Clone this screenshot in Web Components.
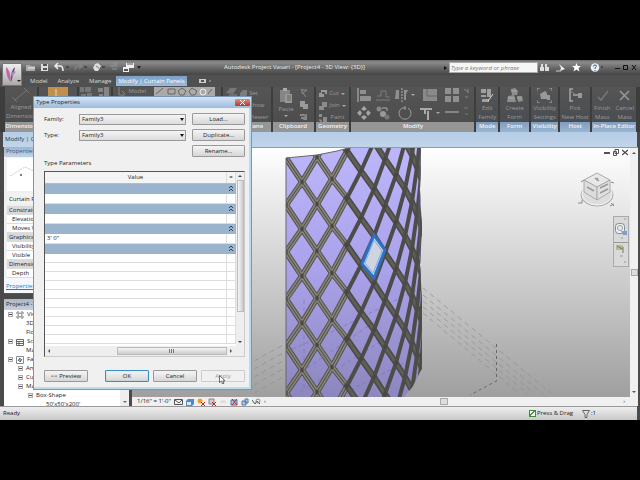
<!DOCTYPE html>
<html lang="en">
<head>
<meta charset="utf-8">
<title>Autodesk Project Vasari</title>
<style>
html,body{margin:0;height:100%;background:#000}
body{font-family:"Open Sans","Noto Sans",sans-serif;font-size:6px;line-height:9px;color:#222}
vasari-app{height:100vh}
</style>
</head>
<body>
<vasari-app></vasari-app>
<script>
const define = (name, html, setup) => customElements.define(name, class extends HTMLElement {
  connectedCallback() {
    if (this.shadowRoot) return;
    const root = this.attachShadow({ mode: 'open' });
    root.innerHTML = '<style>:host,*{box-sizing:border-box}button,input,select{font:inherit;color:inherit;margin:0}button{border:0;padding:0;background:none}svg{display:block;flex:none}</style>' +
      (typeof html === 'function' ? html(this) : html);
    if (setup) setup(root, this);
  }
});

const glyphs = {
  dim: [26, 14, '<path d="M7 12 19 2M4 9l5 5M16 0l5 5" stroke="#777" fill="none"/>'],
  arrow: [20, 16, '<path fill="#c08f4c" d="M0 0h20v16H0z"/><path d="M8 2v9l3-2 3 3" stroke="#e8d9bd" fill="none"/>'],
  blocks: [13, 14, '<path d="M0 0h4v5H0zM5 0h6v5H5zM1 7h5v6H1zM7 6h5v7H7z" fill="#777"/>'],
  windows: [13, 14, '<path d="M1 1h5v4H1zM7 0h5v11H7zM2 7h4v5H2z" fill="#858585"/>'],
  modelline: [8, 9, '<path d="M1 0v8h6M4 4l3 3" stroke="#888" fill="none"/>'],
  draw: [61, 9, '<path fill="#aaa" d="M0 0h61v9H0z"/><path d="M2 7 9 1M14 2h7v5h-7zM28 1l4 3-2 4h-4l-2-4zM38 1l5 3-2 4h-4l-2-4zM58 2l-4 5" stroke="#666" fill="none"/><circle cx="49" cy="5" r="3" stroke="#eee" fill="none"/>'],
  paste: [14, 16, '<path d="M1 2h10v12H1z" fill="#858585"/><path d="M4 0h4v3H4z" fill="#aaa"/><path d="M6 6h7v9H6z" fill="#999"/><path d="M8 8h4M8 10h4M8 12h4" stroke="#666"/>'],
  cutS: [8, 8, '<path d="M1 1h6L3 4l3 4M2 0v5" stroke="#8a8a8a" fill="none"/>'],
  copyS: [8, 8, '<path d="M0 0h5v6H0zM3 3h5v5H3z" fill="#9a9a9a"/>'],
  match: [8, 8, '<path d="M0 1h5v2H0zM1 4h5v2H1zM6 1h1v6H3" fill="#888"/>'],
  cut: [8, 8, '<path d="M2 0h6v4H5v3H0V3h2z" fill="#999"/><path d="M3 2h3v2H3z" fill="#555"/>'],
  join: [8, 8, '<path d="M3 0h5v5H5v3H0V4h3z" fill="#8c8c8c"/>'],
  paint: [9, 8, '<path d="M0 0h3v3H0zM4 3h4v5H4z" fill="#8c8c8c"/><path d="M1 5v2h2" stroke="#aaa" fill="none"/>'],
  align: [14, 14, '<path d="M1 0v14" stroke="#bbb"/><path d="M3 2h6v4H3zM3 8h11v5H3z" fill="#8f8f8f"/>'],
  offset: [14, 14, '<path d="M0 12h14M1 8h4V3h5v6h4" stroke="#7d7d7d" fill="none"/>'],
  mirror: [14, 14, '<path d="M7 0v14" stroke="#aaa" stroke-dasharray="2 1"/><path d="M1 2h3v9H0zM9 2h4l-2 4v6H9z" fill="#8f8f8f"/>'],
  split: [14, 14, '<path d="M0 1h14v12H0z" fill="#8a8a8a"/><path d="M4 1v7h10" stroke="#666" fill="none"/>'],
  array: [14, 14, '<path d="M0 0h6v6H0zM8 0h6v6H8zM0 8h6v6H0zM8 8h6v6H8z" fill="#909090"/>'],
  pin: [5, 10, '<path d="M0 1l4 3M4 1v4M1 9h3" stroke="#888"/>'],
  move: [14, 14, '<path d="M7 0l3 3-3 2-3-2zM7 14l3-3-3-2-3 2zM0 7l3-3 2 3-2 3zM14 7l-3-3-2 3 2 3z" fill="#a4a4a4"/>'],
  copy: [14, 14, '<circle cx="3" cy="3" r="2.5" fill="#888"/><path d="M6 2h5v3" stroke="#aaa" fill="none"/><circle cx="7" cy="8" r="3" fill="#999"/><circle cx="11" cy="11" r="2.5" fill="#777"/>'],
  rotate: [14, 14, '<path d="M4 2a6 6 0 1 0 6 0M7 0v4M4 2h4" stroke="#9c9c9c" fill="none"/>'],
  trim: [14, 14, '<path d="M0 3h12M8 14V5M5 3v5" stroke="#aaa" stroke-width="2" fill="none"/>'],
  dash: [14, 14, '<path d="M0 6h14" stroke="#858585" stroke-width="2"/>'],
  dot: [5, 10, '<path d="M0 2h4M1 8h3" stroke="#7b7b7b"/>'],
  editfam: [15, 15, '<path d="M1 1h5v4H1zM7 1h4v8H7zM1 7h5v2H1zM2 11h7v3H2z" fill="#a0a0a0"/><path d="m8 13 5-7" stroke="#ddd"/>'],
  form: [16, 15, '<path d="M4 1l4-1 3 3-1 4H5zM1 8l6-1 2 7H0zM10 8h5l1 5-5 1z" fill="#8e8e8e"/><path d="M4 3h6M1 10h7M10 10h5" stroke="#aaa"/>'],
  visset: [15, 15, '<path d="M0 3V0h3M12 0h3v3M15 12v3h-3M3 15H0v-3" stroke="#aaa" fill="none"/><path d="M3 6l5-3 2 2v6H4zM10 7h3v5h-3z" fill="#999"/>'],
  host: [15, 15, '<path d="M5 1H2v12h3M5 7h6" stroke="#a5a5a5" fill="none" stroke-width="1.5"/><path d="M10 5h4v5h-4z" fill="#999"/><path d="M2 3l5 3" stroke="#888"/>'],
  check: [13, 15, '<path d="m2 9 3 3 7-9" stroke="#777" stroke-width="1.5" fill="none"/>'],
  cross: [13, 15, '<path d="m2 3 9 9M11 3l-9 9" stroke="#999" stroke-width="1.5" fill="none"/>'],
  plane: [12, 9, '<path d="M1 6l4-5h7l-4 6z" fill="#777"/><path d="M4 8h8" stroke="#888"/>'],
  setI: [7, 8, '<path d="M0 3l3-3h4v5l-3 3H0z" fill="#7c7c7c"/>']
};
const svg = (w, h, body) => `<svg width="${w}" height="${h}" viewBox="0 0 ${w} ${h}" aria-hidden="true">${body}</svg>`;
const icon = n => svg(...glyphs[n]);

define('tool-button', el => `<style>
 :host{display:flex;justify-content:center}
 button{display:flex;align-items:center;gap:2px;color:#9b9b9b;white-space:nowrap;line-height:9px;text-align:center}
 :host([big]) button{flex-direction:column;gap:1px;justify-content:flex-start}
 .more{border:2px solid transparent;border-top-color:#aaa;border-bottom:0}
 </style><button aria-label="${el.getAttribute('label') || el.getAttribute('icon')}">${icon(el.getAttribute('icon'))}${el.childNodes.length ? '<span><slot></slot></span>' : ''}${el.hasAttribute('menu') ? '<i class="more"></i>' : ''}</button>`);

define('ribbon-panel', el => `<style>
 :host{display:flex;flex-direction:column;min-width:0;overflow:hidden}
 .tools{flex:1;background:linear-gradient(#555,#4d4d4d);display:flex;gap:var(--gap,4px);justify-content:center;overflow:hidden}
 .name{height:10px;line-height:9px;text-align:center;white-space:nowrap;background:#969696;color:#f4f4f4;font-weight:600;overflow:hidden;display:flex;justify-content:center}
 :host([context]) .tools{background:linear-gradient(#535556,#4a4d50);gap:5px}
 :host([context]) .name{background:linear-gradient(#809dbc,#9cb6d2)}
 </style><div class="tools"><slot></slot></div><div class="name">${el.getAttribute('name')}</div>`);

define('title-bar', `<style>
 :host{display:flex;align-items:center;height:15px;flex:none;background:linear-gradient(#6a6a6a,#8b8b8b 15%,#626262 60%,#454545);color:#eee;padding:0 3px 0 25px;gap:4px}
 nav{display:flex;gap:5px;align-items:center;flex:195 1 0}
 h1{font:inherit;margin:0;white-space:nowrap}
 .right{flex:268 1 0;display:flex;align-items:center;justify-content:flex-end;gap:6px}
 .find{display:flex;align-items:center;gap:2px}
 input{width:89px;height:11px;border:1px solid #aaa;background:#f6f6f6;padding:0 1px;font-style:italic;min-width:0}
 input::placeholder{color:#777;opacity:1}
 .play{border:2px solid transparent;border-left:3px solid #111;border-right:0}
 .win{display:flex;gap:3px;margin-left:6px}
 </style>
 <nav aria-label="Quick access">
 <button aria-label="Open">${svg(11,9,'<path d="M1 2h4l1 1h4v5H1z" fill="#aaa"/><path d="M3 5h7" stroke="#eee"/>')}</button>
 <button aria-label="Save">${svg(8,9,'<path d="M0 1h7v7H0z" fill="#ddd"/><path d="M2 1h4v2H2zM2 5h4v2H2z" fill="#555"/>')}</button>
 <button aria-label="Undo">${svg(15,9,'<path d="M1 3h5q3 0 3 5M4 0 1 3l3 3" stroke="#eee" fill="none" stroke-width="1.5"/><path d="M12 4h3" stroke="#222"/>')}</button>
 <button aria-label="Redo">${svg(13,9,'<path d="M8 3H4Q1 3 1 7M5 1l3 2-3 3" stroke="#8c8c8c" fill="none"/><path d="M10 4h3" stroke="#222"/>')}</button>
 <button aria-label="Measure">${svg(13,9,'<path d="m3 1 3-1 3 3-3 5H3L1 5z" fill="#ddd"/><path d="m4 3 3 2" stroke="#777"/><path d="M10 4h3" stroke="#222"/>')}</button>
 <button aria-label="Thin lines">${svg(8,9,'<path d="M0 3h8M2 6h5M3 1h4" stroke="#999"/>')}</button>
 <button aria-label="Switch windows">${svg(19,9,'<path d="M3 0h8v5H3zM0 4h6v5H0z" fill="#eee"/><path d="M4 1h6" stroke="#555"/><path d="M1 6h4v2H1z" fill="#555"/><path d="m14 3 4 0-2 3z" fill="#222"/>')}</button>
 </nav>
 <h1>Autodesk Project Vasari - [Project4 - 3D View: {3D}]</h1>
 <div class="right"><span class="find"><i class="play"></i><input type="search" aria-label="Search help" placeholder="Type a keyword or phrase">
 <button aria-label="Search">${svg(9,9,'<path d="M1 1h2v3H1zM5 1h2v3H5zM0 4h4v4H0zM5 4h4v4H5z" fill="#ddd"/>')}</button></span>
 <button aria-label="Communication">${svg(11,9,'<path d="m4 1 6 5-5 2 1-3z" fill="#eee"/><path d="M1 8h5" stroke="#ccc"/>')}</button>
 <button aria-label="Favorites">${svg(9,9,'<path d="m4.500 0 1.200 3H9L6.500 5l1 3.500-3-2-3 2 1-3.500L0 3h3.300z" fill="#fff"/>')}</button>
 <button aria-label="Help">${svg(16,9,'<circle cx="8" cy="4.500" r="4.300" fill="#eee"/><path d="M6.500 3.500q0-1.500 1.500-1.500t1.500 1.300L8 5v1M8 7v1" stroke="#3355aa" fill="none"/><path d="M14 4h2" stroke="#222"/>')}</button>
 <span class="win"><button aria-label="Minimize">${svg(5,9,'<path d="M0 5.500h5" stroke="#111"/>')}</button>
 <button aria-label="Restore">${svg(5,9,'<path d="M.5 2.500h4v4h-4z" stroke="#111" fill="none"/>')}</button>
 <button aria-label="Close">${svg(6,9,'<path d="m1 2 4 5M5 2 1 7" stroke="#111"/>')}</button></span></div>`);

define('ribbon-tabs', `<style>
 :host{display:flex;align-items:center;height:12px;flex:none;background:#505050;padding-left:25px;color:#ddd;gap:0}
 button{padding:0 5px;height:10px;line-height:9px;white-space:nowrap}
 .on{background:linear-gradient(#7d9fc4,#9bbbdc);color:#fff;padding:0 2px}
 .x{margin-left:7px;display:flex;align-items:center}
 </style><button>Model</button><button>Analyze</button><button>Manage</button><button class="on">Modify | Curtain Panels</button>
 <button class="x" aria-label="Collapse ribbon">${svg(12,8,'<path d="M0 2h7v4H0z" fill="#ccc"/><path d="M2 3h3v2H2z" fill="#555"/><path d="M10 4h2" stroke="#aaa"/>')}</button>`);

define('ribbon-bar', `<style>
 :host{display:flex;height:45px;flex:none;background:#3d3d3d;padding:0 4px 0 5px;gap:2px}
 .col{display:flex;flex-direction:column;gap:4px;align-items:flex-start;padding-top:2px}
 .col.text{gap:3px}
 .grid{display:grid;grid-template-columns:repeat(6,auto);gap:4px 5px;padding-top:1px;align-content:start}
 tool-button{align-items:flex-start}
 tool-button[big]{padding-top:1px}
 </style>
 <ribbon-panel name="Dimension" style="flex:32 1 0"><tool-button big icon="dim">Aligned<br>Dimension</tool-button></ribbon-panel>
 <ribbon-panel name="Select" style="flex:38 1 0"><tool-button icon="arrow"></tool-button></ribbon-panel>
 <ribbon-panel name="Properties" style="flex:32 1 0"><tool-button icon="blocks"></tool-button><tool-button icon="windows"></tool-button></ribbon-panel>
 <ribbon-panel name="Draw" style="flex:108 1 0"><tool-button icon="modelline">Model</tool-button><tool-button icon="draw" style="margin-left:4px"></tool-button></ribbon-panel>
 <ribbon-panel name="Work Plane" style="flex:48 1 0;--gap:3px"><tool-button icon="plane"></tool-button><div class="col text"><tool-button icon="setI">Set</tool-button><tool-button icon="setI">Show</tool-button><tool-button icon="setI">Viewer</tool-button></div></ribbon-panel>
 <ribbon-panel name="Clipboard" style="flex:41 1 0"><tool-button big icon="paste" menu>Paste</tool-button><div class="col" style="padding-left:2px"><tool-button icon="cutS"></tool-button><tool-button icon="copyS"></tool-button><tool-button icon="match"></tool-button></div></ribbon-panel>
 <ribbon-panel name="Geometry" style="flex:34 1 0"><div class="col text"><tool-button icon="cut" menu>Cut</tool-button><tool-button icon="join" menu>Join</tool-button><tool-button icon="paint">Paint</tool-button></div></ribbon-panel>
 <ribbon-panel name="Modify" style="flex:123 1 0"><div class="grid">
  <tool-button icon="align"></tool-button><tool-button icon="offset"></tool-button><tool-button icon="mirror" menu></tool-button><tool-button icon="split"></tool-button><tool-button icon="array"></tool-button><tool-button icon="pin"></tool-button>
  <tool-button icon="move"></tool-button><tool-button icon="copy"></tool-button><tool-button icon="rotate"></tool-button><tool-button icon="trim" menu></tool-button><tool-button icon="dash"></tool-button><tool-button icon="dot"></tool-button></div></ribbon-panel>
 <ribbon-panel context name="Mode" style="flex:22 1 0"><tool-button big icon="editfam">Edit<br>Family</tool-button></ribbon-panel>
 <ribbon-panel context name="Form" style="flex:29 1 0"><tool-button big icon="form">Create<br>Form</tool-button></ribbon-panel>
 <ribbon-panel context name="Visibility" style="flex:27 1 0"><tool-button big icon="visset">Visibility<br>Settings</tool-button></ribbon-panel>
 <ribbon-panel context name="Host" style="flex:30 1 0"><tool-button big icon="host">Pick<br>New Host</tool-button></ribbon-panel>
 <ribbon-panel context name="In-Place Editor" style="flex:44 1 0"><tool-button big icon="check">Finish<br>Mass</tool-button><tool-button big icon="cross">Cancel<br>Mass</tool-button></ribbon-panel>`);

define('properties-palette', `<style>
 :host{display:flex;flex-direction:column;background:#f0f0f0;border-bottom:1px solid #555}
 h2{margin:0;font:inherit;height:10px;background:linear-gradient(#9eb6d0,#c0d2e5);color:#3c5878;padding-left:2px}
 .pic{height:33px;background:#fff;margin:1px 3px 2px;display:flex}
 table{border-collapse:collapse;margin:0 3px;background:#fff;width:calc(100% - 6px)}
 td,th{height:9px;padding:0 0 0 5px;font-weight:400;text-align:left;white-space:nowrap;line-height:8px;border-bottom:1px solid #ddd}
 th{background:#d9d9d9;padding-left:2px}.top th{background:#f2f2f2;height:12px;border-bottom:2px solid #eee}
 .foot{padding:4px 2px 0;height:15px;background:#f4f8fc} a{color:#2a7ab8}
 </style><h2>Properties</h2><div class="pic">${svg(60,33,'<path d="M3 18 18 9l22 10" stroke="#ccc" fill="none" stroke-dasharray="2 1"/><circle cx="14" cy="17" r="1" fill="#555"/>')}</div>
 <table><tbody><tr class="top"><th>Curtain Panels (1)</th></tr><tr><th>Constraints</th></tr><tr><td>Elevation</td></tr><tr><td>Moves With Grids</td></tr><tr><th>Graphics</th></tr><tr><td>Visibility/Graphics</td></tr><tr><td>Visible</td></tr><tr><th>Dimensions</th></tr><tr><td>Depth</td></tr></tbody></table>
 <div class="foot"><a href="#help">Properties help</a></div>`);

define('tree-item', el => `<style>
 :host{display:flex;align-items:center;height:9px;gap:3px;white-space:nowrap;padding-left:calc(4px + var(--level,0) * 10px)}
 .t{width:5px;height:5px;border:1px solid #aaa;background:#eee;flex:none}
 .t::after{content:"";display:block;height:1px;margin:1px 0;background:#555}
 .t.none{visibility:hidden}
 </style><i class="t ${el.hasAttribute('leaf') ? 'none' : ''}"></i>${el.hasAttribute('pic') ? svg(8,8,{v:'<path d="M1 3V1h2M5 1h2v2M7 5v2H5M3 7H1V5" stroke="#777" fill="none"/><circle cx="4" cy="4" r="2" stroke="#777" fill="none"/>',s:'<path d="M.5 1.500h7v6h-7zM0 3.500h8M0 5.500h8M3 3v4" stroke="#666" fill="none"/>',f:'<path d="M.5.500h7v7h-7z" stroke="#889" fill="none"/><path d="m2 5 2-3v4l2-3" stroke="#555" fill="none"/>'}[el.getAttribute('pic')]) : ''}<span><slot></slot></span>`,
 (r, el) => el.style.setProperty('--level', el.getAttribute('level') || 0));

define('project-browser', `<style>
 :host{display:flex;flex-direction:column;background:#fff;min-height:0;overflow:hidden}
 h2{margin:0;font:inherit;height:11px;flex:none;background:linear-gradient(#aeb9c6,#c6d0dc);padding:1px 2px;white-space:nowrap}
 .in{display:flex;flex:1;min-height:0}.tree{flex:1;overflow:hidden}
 .bar{width:9px;background:#eee;display:flex;align-items:flex-end;justify-content:center;padding-bottom:3px}
 i.d{border:2px solid transparent;border-top-color:#666;border-bottom:0}
 </style><h2>Project4 - Project Browser</h2><div class="in"><div class="tree">
 <tree-item pic="v">Views (all)</tree-item><tree-item leaf level="1">3D Views</tree-item><tree-item leaf level="1">Floor Plans</tree-item><tree-item pic="s">Schedules</tree-item><tree-item leaf level="1">Mass</tree-item><tree-item pic="f">Families</tree-item><tree-item level="1">Annotation</tree-item><tree-item level="1">Curtain Panels</tree-item><tree-item level="1">Mass</tree-item><tree-item level="2">Box-Shape</tree-item><tree-item leaf level="3">50'x50'x200'</tree-item></div>
 <div class="bar"><i class="d"></i></div></div>`);

function facade() {
  // Column positions of the curved wall and the height of one diagonal at each column.
  const X = [286,302,317,332,347,361,374,385,396,405,412,417,421,424];
  const D = [205,229,251,273,292,312,330,347,363,377,390,402,413,423];
  let near = '', down = '', up = '', joints = '';
  for (let n = -7; n < 6; n++) for (let k = 0; k < X.length - 1; k++) {
    const y = D[k] + 47 * n;
    const a = `M${X[k]} ${y}L${X[k+1]} ${D[k+1] + 47*n}`, b = `M${X[k]} ${y}L${X[k+1]} ${D[k+1] + 47*(n-1)}`;
    if (k < 4) near += a + b; else { down += a; up += b; }
    if (k < 9) joints += `M${X[k]-2} ${y}l2-3 2 3-2 3z`;
  }
  return `<g clip-path="url(#wall)"><path d="M280 140h150v260H280z" fill="url(#skin)"/>
  <path d="M304 300v90M286 352l50-22 80-40M290 380l90-62M300 392l80-50M350 390l60-30" stroke="#7670ad" stroke-dasharray="4 3" fill="none" opacity=".6"/>
  <g fill="none" stroke-linecap="round"><path d="${near}" stroke="#55534c" stroke-width="6"/><path d="${near}" stroke="#86847a" stroke-width="4"/><path d="${near}" stroke="#4b4a45" stroke-width="1"/>
  <path d="${down}" stroke="#4b4a45" stroke-width="6"/><path d="${down}" stroke="#5f5e57" stroke-width="3"/><path d="${up}" stroke="#4d4c49" stroke-width="4"/></g><path d="${joints}" fill="#484741"/>
  <path d="M421 147q-4 80 1 125t0 100" stroke="#555560" stroke-width="2" fill="none"/></g>
  <path d="M286 397V158l31-3 20-4 15-4" fill="none" stroke="#66666c"/>
  <path d="M374 235 385 250 374 278 362 264z" fill="#c8d6ea" stroke="#2f6fc4" stroke-width="3"/><path d="M374 240 382 251 373 273 365 263z" fill="#cfd4df" stroke="#7eb0ea"/>`;
}

define('model-view', `<style>
 :host{display:flex;flex-direction:column;min-width:0;min-height:0;border-top:1px solid #999}
 .main{display:flex;flex:1;min-height:0}
 .canvas{flex:1;position:relative;overflow:hidden;background:linear-gradient(#fff,#f5f5f5 10%,#cbcbcb 55%,#9f9f9f)}
 .scene{position:absolute;inset:0;width:100%;height:100%}
 .mdi{position:absolute;right:2px;top:1px;display:flex;gap:3px}
 .cube{position:absolute;right:14px;top:22px}
 .nav{position:absolute;right:1px;top:68px;width:16px;height:51px;border:1px solid #aaa;background:#d9d9d9;display:flex;flex-direction:column;align-items:center}
 .v{width:8px;background:#f0f0f0;display:flex;flex-direction:column;justify-content:space-between;align-items:center;padding:4px 0}
 .up,.dn{border:2px solid transparent;border-bottom-color:#555;border-top:0}.dn{border-bottom:0;border-top:2px solid #555}
 .th{width:7px;height:7px;border:1px solid #aaa;background:#ddd}
 .controls{height:9px;flex:none;background:#f0f0f0;display:flex;align-items:center;padding-left:5px;gap:3px;white-space:nowrap;padding-right:13px}
 .sp{flex:1}
 </style><div class="main"><div class="canvas">
 <svg class="scene" aria-label="3D view"><defs><linearGradient id="skin" x2="0" y2="1"><stop stop-color="#bdb7fb"/><stop offset=".5" stop-color="#aaa2ea"/><stop offset="1" stop-color="#8b86bd"/></linearGradient>
 <clipPath id="wall"><path d="M286 158 317 155 337 151 352 147H421L420 190 422 230 420 265 422 300V368L413 386 404 397H286z"/></clipPath></defs>
 <g transform="translate(-132 -148)"><g fill="none" stroke="#8f8f8f" stroke-dasharray="5 4" opacity=".7"><path d="m423 288 128 105M423 295l120 99M423 301l112 93M423 307l105 87M423 313l97 81M254 361l31-17M254 369l31-17M254 377l31-17M254 385l31-17M254 393l31-17"/></g>
 <path d="M496.500 344v37L470 395" stroke="#666" stroke-dasharray="3 3" fill="none"/>${facade()}</g></svg>
 <span class="mdi"><button aria-label="Minimize view">${svg(6,7,'<path d="M0 4h6" stroke="#555" stroke-width="2"/>')}</button><button aria-label="Restore view">${svg(6,7,'<path d="M2 .500h3.500v4H2zM.5 2.500h3v4h-3z" fill="none" stroke="#555"/>')}</button><button aria-label="Close view">${svg(6,7,'<path d="m0 1 6 5M6 1 0 6" stroke="#444" stroke-width="1.300"/>')}</button></span>
 <div class="cube">${svg(39,39,'<ellipse cx="20" cy="25" rx="16" ry="11" fill="#c9c9c9" stroke="#aaa"/><ellipse cx="20" cy="24" rx="15" ry="11" fill="#ddd" stroke="#f5f5f5"/><path d="M7 10 20 3l13 7-13 7z" fill="#e8e8e8" stroke="#aaa"/><path d="M7 10v12l13 8V17z" fill="#ddd" stroke="#aaa"/><path d="M33 10v12l-13 8V17z" fill="#e0e0e0" stroke="#aaa"/><path d="m18 8 4 3M19 10l2-2M10 17l7 4M23 18l8-4M23 23l8-4" stroke="#999" stroke-width="1.500"/><path d="M1 33h4v-3M33 36l4-2M34 33l3 3M4 12l3-2M34 12l3 1" stroke="#888" fill="none"/>')}</div>
 <div class="nav">${svg(14,49,'<path d="M10 2h2M0 25.500h14M7 21h2M6 39h3M10 45h2" stroke="#999"/><rect x="1.500" y="6.500" width="9" height="10" rx="3" fill="#eee" stroke="#7d8b9c"/><circle cx="6" cy="11" r="2.500" fill="none" stroke="#99a"/><path d="M7 14h6v4H9z" fill="#7fa0cb"/><path d="M2 28h7v5H2z" fill="#b4bc88"/><path d="m3 29 5 3M9 30v6" stroke="#777"/>')}</div>
 </div><div class="v"><i class="up"></i><i style="flex:1"></i><i class="th"></i><i style="flex:1"></i><i class="dn"></i></div></div>
 <div class="controls"><span>1/16" = 1'-0"</span>
 <button aria-label="Detail level">${svg(9,8,'<path d="M.5 1.500h8v5h-8zM1 2l4 3 3-3" stroke="#555" fill="none"/>')}</button>
 <button aria-label="Visual style">${svg(8,8,'<path d="M2 1h6v5L6 8H0V3z" fill="#4e8ac9"/><path d="M1 4h4v3H1z" fill="#dceafa"/>')}</button>
 <button aria-label="Sun path">${svg(8,8,'<circle cx="3" cy="3" r="2.500" fill="#f0a030"/><path d="m4 4 4 4M8 4 4 8" stroke="#c22"/>')}</button>
 <button aria-label="Shadows">${svg(8,8,'<path d="M1 1h5v5H1z" fill="#ccc" stroke="#888"/><path d="m4 4 4 4M8 4 4 8" stroke="#c22"/>')}</button>
 <button aria-label="Render">${svg(8,8,'<path d="M1 5q0-3 3-3t3 3z" fill="#ddd"/>')}</button>
 <button aria-label="Crop view">${svg(8,8,'<path d="M1 2h6v5H1z" fill="#acc5e4" stroke="#5579a5"/><path d="m2 1 5 6M7 1 2 7" stroke="#c22"/>')}</button>
 <button aria-label="Crop region">${svg(8,8,'<path d="M1 3h4v4H1zM4 1h3v4H4z" fill="#b8cce4" stroke="#5579a5"/>')}</button>
 <button aria-label="Temporary hide">${svg(9,8,'<path d="M0 2l3 4 2-3 3 3" stroke="#555" fill="none"/><circle cx="6" cy="3" r="2" fill="none" stroke="#888"/>')}</button>
 <span>‹</span><i class="sp"></i><i class="th" style="width:8px"></i><i class="sp"></i><span>›</span></div>`);

define('status-bar', `<style>
 :host{display:flex;align-items:center;height:14px;flex:none;background:linear-gradient(#eee,#c9c9c9);border-top:1px solid #999;padding:0 41px 0 3px;margin:0 3px 0 0;gap:9px}
 .r{flex:1}label{display:flex;align-items:center;gap:1px}
 input{appearance:none;width:7px;height:7px;border:1px solid #3b8c3b;background:linear-gradient(135deg,#fff 40%,#3ea33e 40%,#3ea33e 60%,#fff 60%)}
 button{display:flex;align-items:center}
 </style><span class="r">Ready</span><label><input type="checkbox" checked>Press &amp; Drag</label><button aria-label="Filter">${svg(9,8,'<path d="M.5.500h7l-2.500 4v3h-2v-3z" fill="#ddd" stroke="#666"/>')}:1</button>`);

define('type-dialog', `<style>
 :host{display:flex;flex-direction:column;background:#f0f0f0;border:1px solid #7896b4;box-shadow:inset -2px -2px #b9dcec;}
 header{height:11px;flex:none;background:linear-gradient(#d5e4f4,#9bbbdc);display:flex;align-items:center;justify-content:space-between;padding:0 1px 0 2px}
 header button{width:15px;height:7px;background:linear-gradient(#e09080,#b83624);display:grid;place-items:center;border-radius:1px}
 .body{padding:5px 6px 7px 10px;display:flex;flex-direction:column;flex:1;min-height:0}
 .form{display:grid;grid-template-columns:35px 1fr 53px;gap:4px 0;align-items:center}
 select{appearance:none;height:11px;border:1px solid #999;padding:0 2px;line-height:9px;border-radius:0;background:linear-gradient(#f4f4f4,#ddd);width:calc(100% - 6px)}
 .s{display:grid;position:relative;align-items:center}.s::after{content:"";position:absolute;right:8px;top:4px;border:2px solid transparent;border-top:3px solid #111;border-bottom:0}
 .b{height:12px;border:1px solid #999;background:linear-gradient(#f4f4f4,#e6e6e6 50%,#d6d6d6);line-height:9px;border-radius:1px}
 h3{font:inherit;margin:2px 0 3px}
 .list{border:1px solid #555;border-right-color:#ccc;border-bottom-color:#ccc;flex:1;display:flex;flex-direction:column;background:#fff;min-height:0}
 .up{display:flex;flex:1;min-height:0;overflow:hidden}
 table{border-collapse:collapse;flex:1;table-layout:fixed;align-self:flex-start}
 td,th{padding:0 2px;height:9px;border-bottom:1px solid #ddd;font-weight:400;line-height:7px;border-right:1px solid #ddd}
 th{height:11px;background:#f4f4f4;border-bottom-color:#bbb}
 .w{width:8px}
 tr.g td{background:#9ab4ce;height:10px;border-color:#9ab4ce;padding:0 1px} tr.h td{height:10px}
 .v{width:8px;background:#eee;display:flex;flex-direction:column;align-items:center;padding:3px 0;gap:3px}
 .v b{width:7px;height:132px;border:1px solid #bbb;background:linear-gradient(90deg,#f6f6f6,#ccc)}
 .a{border:2px solid transparent;border-bottom-color:#444;border-top:0}.a.d{border-bottom:0;border-top:2px solid #444;margin-top:auto}
 .hb{height:10px;flex:none;background:#eee;display:flex;align-items:center;padding:0 12px 0 3px;gap:3px}
 .hb b{margin-left:auto;flex:0 0 60%;height:8px;border:1px solid #bbb;background:linear-gradient(#f4f4f4,#ccc);display:grid;place-items:center}
 .l{border:2px solid transparent;border-right-color:#555;border-left:0}.r{border:2px solid transparent;border-left-color:#555;border-right:0}
 footer{display:flex;gap:4px;margin-top:13px}
 footer .b{width:44px}footer .b:first-child{margin-right:auto}
 footer .b:nth-child(2){border-color:#3c8fc0;box-shadow:inset 0 0 1px #42b4e6;}
 .b:disabled{color:#999;background:#f0f0f0;border-color:#ccc}
 .cur{position:absolute;right:25px;bottom:5px}
 </style><header><span>Type Properties</span><button aria-label="Close">${svg(5,5,'<path d="m0 0 5 5M5 0 0 5" stroke="#fff"/>')}</button></header>
 <div class="body"><div class="form">
 <label for="f">Family:</label><span class="s"><select id="f"><option>Family3</option></select></span><button class="b">Load...</button>
 <label for="t">Type:</label><span class="s"><select id="t"><option>Family3</option></select></span><button class="b">Duplicate...</button>
 <button class="b" style="grid-column:3">Rename...</button></div>
 <h3>Type Parameters</h3>
 <div class="list"><div class="up"><table><thead><tr><th>Value</th><th class="w">=</th></tr></thead><tbody></tbody></table><div class="v"><i class="a"></i><b></b><i class="a d"></i></div></div>
 <div class="hb"><i class="l"></i><b>${svg(5,4,'<path d="M.5 0v4M2.500 0v4M4.500 0v4" stroke="#777"/>')}</b><i class="r"></i></div></div>
 <footer><button class="b">&lt;&lt; Preview</button><button class="b">OK</button><button class="b">Cancel</button><button class="b" disabled>Apply</button></footer></div>
 <div class="cur">${svg(7,9,'<path d="M.5.500v7l2-1.500 1 3 1.500-.7-1.200-2.500H6z" fill="#fff" stroke="#333" stroke-width=".7"/>')}</div>`,
 root => {
  const rows = [];
  const fold = svg(6, 7, '<path d="m1 3 2-2 2 2M1 6l2-2 2 2" stroke="#345" fill="none"/>');
  for (let i = 0; i < 4; i++) rows.push(`<tr class="g"><td></td><td>${fold}</td></tr>`, `<tr class="${i < 3 ? 'h' : ''}"><td>${i === 2 ? `3'  0"` : ''}</td><td></td></tr>`);
  for (let i = 0; i < 9; i++) rows.push('<tr><td></td><td></td></tr>');
  root.querySelector('tbody').innerHTML = rows.join('');
 });

define('vasari-app', `<style>
 :host{display:flex;flex-direction:column;padding:60px 0;background:#000}
 .win{flex:1;display:flex;flex-direction:column;position:relative;min-height:0;background:#4a4a4a}
 .options{height:15px;background:linear-gradient(#b6cde6,#c1d5ea);margin:0 3px;padding:3px 2px;color:#234;flex:none;white-space:nowrap}
 .work{flex:1;display:grid;grid-template:minmax(0,1fr)/125px minmax(0,1fr);gap:3px;padding:0 2px 0 4px;min-height:0}
 .left{display:flex;flex-direction:column;min-height:0;gap:5px}
 project-browser{flex:1}
 .logo{position:absolute;left:2px;top:3px;width:20px;height:23px;background:linear-gradient(#eee,#a9a9a9);border:1px solid #777;display:grid;place-items:center}
 type-dialog{position:absolute;left:33px;top:36px;width:219px;height:294px}
 </style><div class="win"><title-bar></title-bar><ribbon-tabs></ribbon-tabs><ribbon-bar></ribbon-bar>
 <div class="options">Modify | Curtain Panels</div>
 <div class="work"><div class="left"><properties-palette></properties-palette><project-browser></project-browser></div><model-view></model-view></div>
 <status-bar></status-bar>
 <button class="logo" aria-label="Application menu">${svg(18,19,'<path d="M3 2q4 2 5 15Q3 13 3 2z" fill="#c065a5"/><path d="M8 17Q7 6 12 2q-1 6-4 15z" fill="#713a7d"/><path d="M8 8q3-3 5-1-3 2-4 7" fill="#a88bb0"/><path d="M14 15h4l-2 2z" fill="#222"/>')}</button>
 <type-dialog></type-dialog></div>`);
</script>
</body>
</html>
